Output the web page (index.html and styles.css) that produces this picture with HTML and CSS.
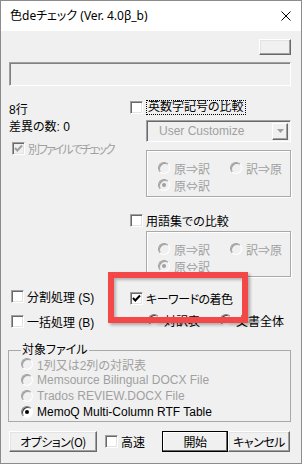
FILE: index.html
```html
<!DOCTYPE html>
<html lang="ja">
<head>
  <meta charset="UTF-8">
  <meta name="viewport" content="width=device-width, initial-scale=1.0">
  <title>色deチェック</title>
  <link rel="stylesheet" href="styles.css">
</head>
<body>
  <div class="window">
    <div class="titlebar">
      <span class="title">色deチェック (Ver. 4.0β_b)</span>
      <svg class="close" width="10" height="10" viewBox="0 0 10 10">
        <path d="M0.5 0.5 L9.5 9.5 M9.5 0.5 L0.5 9.5" stroke="#000" stroke-width="1"/>
      </svg>
    </div>

    <div class="client">
      <div class="tool-row">
        <div class="btn small-btn"></div>
      </div>
      <div class="progress"></div>

      <!-- compare options -->
      <div class="panel">
        <div class="col-left">
          <div class="row first">8行</div>
          <div class="row second">差異の数: 0</div>
          <div class="row check disabled indent">
            <span class="box checked"><svg viewBox="0 0 11 11"><path d="M2 5 L4.3 7.5 L9 2.5"/></svg></span>
            <span class="kana tight">別ファイルでチェック</span>
          </div>
        </div>
        <div class="col-right">
          <div class="row check">
            <span class="box"></span>
            <span class="focus">英数字記号の比較</span>
          </div>
          <div class="combo">
            <span>User Customize</span>
            <span class="drop"><svg width="7" height="4" viewBox="0 0 7 4"><path d="M0 0 H7 L3.5 4 Z" fill="#a0a0a0"/></svg></span>
          </div>
          <div class="group first-group">
            <div class="opt disabled"><span class="radio"></span>原⇒訳</div>
            <div class="opt disabled"><span class="radio"></span>訳⇒原</div>
            <div class="opt disabled"><span class="radio on"></span>原⇔訳</div>
          </div>
          <div class="row check glossary">
            <span class="box"></span>
            <span>用語集での比較</span>
          </div>
          <div class="group second-group">
            <div class="opt disabled"><span class="radio"></span>原⇒訳</div>
            <div class="opt disabled"><span class="radio"></span>訳⇒原</div>
            <div class="opt disabled"><span class="radio on"></span>原⇔訳</div>
          </div>
        </div>
      </div>

      <!-- processing options -->
      <div class="panel lower">
        <div class="col-left">
          <div class="row check small-indent">
            <span class="box"></span>
            <span>分割処理 (S)</span>
          </div>
          <div class="row check small-indent batch">
            <span class="box"></span>
            <span>一括処理 (B)</span>
          </div>
        </div>
        <div class="col-right">
          <div class="row check keyword">
            <span class="box checked"><svg viewBox="0 0 11 11"><path d="M2 5 L4.3 7.5 L9 2.5"/></svg></span>
            <span class="kana loose">キーワードの着色</span>
          </div>
          <div class="scope">
            <div class="opt"><span class="radio on"></span>対訳表</div>
            <div class="opt"><span class="radio"></span>文書全体</div>
          </div>
        </div>
      </div>

      <fieldset class="files">
        <legend>対象ファイル</legend>
        <div class="opt disabled"><span class="radio"></span>1列又は2列の対訳表</div>
        <div class="opt disabled"><span class="radio"></span>Memsource Bilingual DOCX File</div>
        <div class="opt disabled"><span class="radio"></span>Trados REVIEW.DOCX File</div>
        <div class="opt"><span class="radio on"></span>MemoQ Multi-Column RTF Table</div>
      </fieldset>

      <div class="actions">
        <div class="btn option-btn">オプション(O)</div>
        <div class="row check fast">
          <span class="box"></span>
          <span>高速</span>
        </div>
        <div class="btn btn-default start-btn">開始</div>
        <div class="btn cancel-btn">キャンセル</div>
      </div>
    </div>

    <div class="callout"></div>
  </div>
</body>
</html>
```

FILE: styles.css
```css
* {
  box-sizing: border-box;
}

body {
  margin: 0;
  background: #fff;
}

.window {
  position: relative;
  width: 302px;
  height: 464px;
  border: 1px solid #8c8c8c;
  background: #f0f0f0; /* dialog face */
  display: flex;
  flex-direction: column;
  font-family: "Liberation Sans", "Noto Sans CJK JP", sans-serif;
  font-size: 12px;
  font-feature-settings: "palt" 1;
  color: #000;
}

.titlebar {
  flex: none;
  height: 30px;
  background: #fff;
  display: flex;
  align-items: center;
  padding-left: 9px;
}

.title {
  font-family: "Noto Sans", "Noto Sans CJK JP", sans-serif;
  font-size: 12px;
  line-height: 16px;
}

.close {
  margin-left: auto;
  margin-right: 10px;
}

.client {
  padding: 8px 10px 0 8px;
}

.tool-row {
  display: flex;
  justify-content: flex-end;
}

/* raised 3D button */
.btn {
  display: flex;
  align-items: center;
  justify-content: center;
  height: 21px;
  background: #f0f0f0;
  border: 1px solid;
  border-color: #fff #696969 #696969 #fff;
  box-shadow: inset -1px -1px #a0a0a0, inset 1px 1px #e3e3e3;
  font-family: "Noto Sans CJK JP", sans-serif;
  letter-spacing: -0.5px;
  white-space: nowrap;
}

.small-btn {
  width: 32px;
  height: 16px;
}

.progress {
  margin-top: 7px;
  height: 24px;
  border: 1px solid;
  border-color: #a0a0a0 #fff #fff #a0a0a0;
  box-shadow: inset 1px 1px #808080;
  background: #f0f0f0;
}

.panel {
  display: flex;
  margin-top: 13px;
}

.panel.lower {
  margin-top: 11px;
}

.col-left {
  width: 121px;
  flex: none;
}

.col-right {
  flex: 1;
}

.row {
  display: flex;
  align-items: center;
  height: 16px;
  white-space: nowrap;
}

.row.first {
  margin-top: 1px;
}

.row.second {
  margin-top: 1px;
}

.check {
  gap: 3px;
}

.col-left .check.indent {
  margin-top: 7px;
  padding-left: 3px;
}

.small-indent {
  padding-left: 2px;
}

.batch {
  margin-top: 9px;
}

.disabled {
  color: #a0a0a0;
}

.kana.tight {
  letter-spacing: -2px;
}

.kana.loose {
  letter-spacing: -0.5px;
}

/* checkbox */
.box {
  flex: none;
  width: 13px;
  height: 13px;
  background: #fff;
  border: 1px solid;
  border-color: #a0a0a0 #fff #fff #a0a0a0;
  box-shadow: inset 1px 1px #696969, inset -1px -1px #e3e3e3;
  display: flex;
}

.box svg {
  width: 11px;
  height: 11px;
}

.box svg path {
  fill: none;
  stroke: #000;
  stroke-width: 2;
}

.disabled .box {
  background: #f0f0f0;
}

.disabled .box svg path {
  stroke: #a0a0a0;
}

.focus {
  margin-left: 1px;
  padding: 0 1px;
  outline: 1px dotted #000;
  line-height: 13px;
}

.combo {
  margin: 5px 0 0 16px;
  width: 145px;
  height: 22px;
  display: flex;
  align-items: center;
  padding-left: 12px;
  color: #a0a0a0;
  border: 1px solid;
  border-color: #a0a0a0 #fff #fff #a0a0a0;
  box-shadow: inset 1px 1px #696969;
  background: #f0f0f0;
}

.drop {
  margin-left: auto;
  margin-right: 2px;
  width: 16px;
  height: 17px;
  display: flex;
  align-items: center;
  justify-content: center;
  border: 1px solid;
  border-color: #fff #696969 #696969 #fff;
  box-shadow: inset -1px -1px #a0a0a0;
}

/* etched group frames */
.group {
  margin-left: 16px;
  width: 145px;
  border: 1px solid #a9a9a9;
  box-shadow: inset 1px 1px #fff, 1px 1px #fff;
  display: grid;
  grid-template-columns: 72px auto;
  grid-auto-rows: 17px;
  align-content: start;
  padding: 9px 0 0 11px;
  font-family: "Noto Sans CJK JP", sans-serif;
  font-feature-settings: normal;
}

.first-group {
  margin-top: 8px;
  height: 47px;
}

.second-group {
  margin-top: 3px;
  height: 46px;
}

.glossary {
  margin-top: 15px;
}

.opt {
  display: flex;
  align-items: center;
  gap: 4px;
  height: 16px;
  white-space: nowrap;
}

/* radio button */
.radio {
  flex: none;
  position: relative;
  width: 12px;
  height: 12px;
  border-radius: 50%;
  background: #fff;
  border: 1px solid;
  border-color: #808080 #fff #fff #808080;
  box-shadow: inset 1px 1px #404040;
}

.disabled .radio {
  background: #f0f0f0;
  border-color: #a0a0a0 #fff #fff #a0a0a0;
  box-shadow: inset 1px 1px #a0a0a0;
}

.radio.on::after {
  content: "";
  position: absolute;
  left: 3px;
  top: 3px;
  width: 4px;
  height: 4px;
  border-radius: 50%;
  background: #000;
}

.disabled .radio.on::after {
  background: #a0a0a0;
}

.keyword {
  margin-top: 2px;
}

.scope {
  margin-top: 6px;
  padding-left: 18px;
  display: grid;
  grid-template-columns: 72px auto;
}

.files {
  margin: 15px 0 0 -1px;
  width: 283px;
  padding: 0 0 1px 12px;
  border: 1px solid #a9a9a9;
  min-width: 0;
}

.files legend {
  padding: 0 1px;
  line-height: 12px;
}

.actions {
  margin-top: 9px;
  display: flex;
  align-items: center;
}

.option-btn {
  width: 88px;
}

.fast {
  margin-left: 8px;
}

.start-btn {
  margin-left: auto;
  width: 66px;
  border: 1px solid #000;
  box-shadow: inset -1px -1px #696969, inset 1px 1px #fff;
}

.cancel-btn {
  width: 62px;
  margin-right: 1px;
}

/* annotation frame laid over the dialog */
.callout {
  position: absolute;
  left: 107px;
  top: 271px;
  width: 140px;
  height: 51px;
  border: 6px solid #f44848;
  box-shadow: 2px 2px 3px rgba(0, 0, 0, 0.3), inset 2px 2px 3px rgba(0, 0, 0, 0.25);
  z-index: 2;
}
```
